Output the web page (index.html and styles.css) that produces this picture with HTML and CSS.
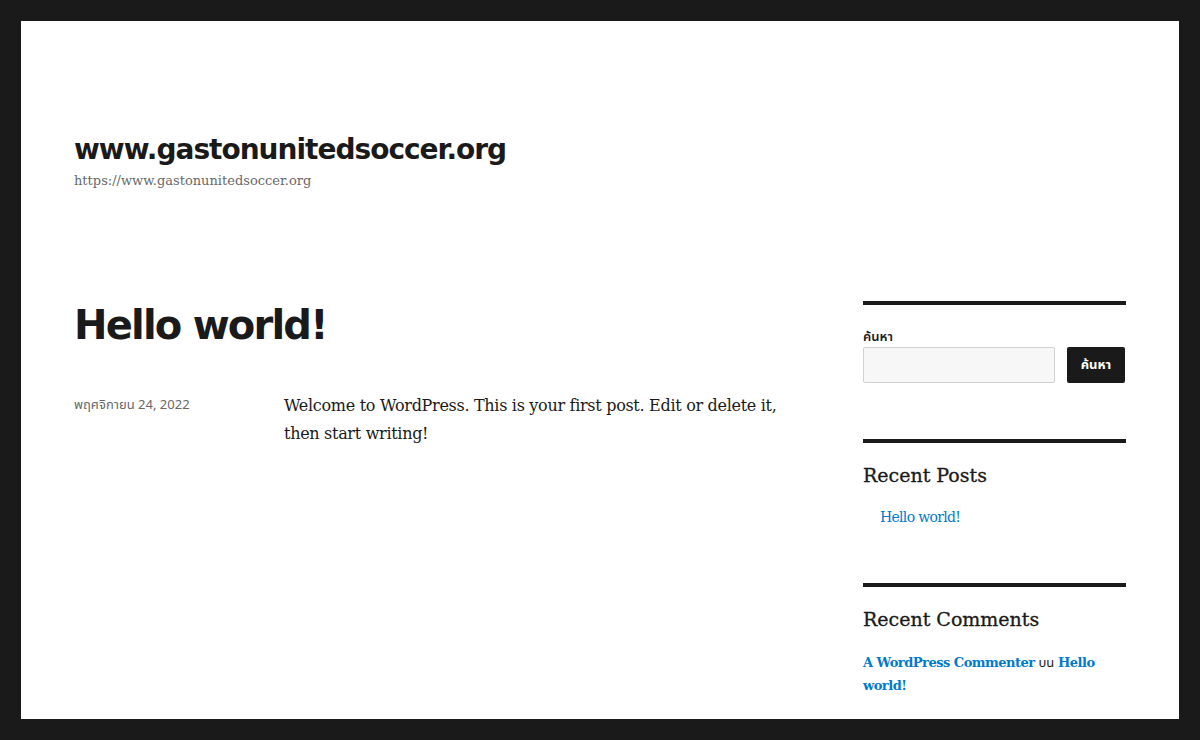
FILE: index.html
```html
<!DOCTYPE html>
<html lang="th">
<head>
    <meta charset="UTF-8">
    <meta name="viewport" content="width=device-width, initial-scale=1.0">
    <title>www.gastonunitedsoccer.org</title>
    <link rel="stylesheet" href="styles.css">
</head>
<body>
<div class="site">
    <header class="site-header">
        <p class="site-title"><a href="#">www.gastonunitedsoccer.org</a></p>
        <p class="site-description">https://www.gastonunitedsoccer.org</p>
    </header>

    <div class="site-content">
        <main class="content-area">
            <article class="post">
                <h1 class="entry-title">Hello world!</h1>
                <div class="entry-body">
                    <footer class="entry-footer">
                        <a href="#" class="posted-on">พฤศจิกายน 24, 2022</a>
                    </footer>
                    <div class="entry-content">
                        <p>Welcome to WordPress. This is your first post. Edit or delete it, then start writing!</p>
                    </div>
                </div>
            </article>
        </main>

        <aside class="sidebar">
            <section class="widget">
                <form class="search-form">
                    <label for="s" class="search-label">ค้นหา</label>
                    <div class="search-row">
                        <input type="search" id="s" class="search-field">
                        <button type="submit" class="search-button">ค้นหา</button>
                    </div>
                </form>
            </section>

            <section class="widget widget-posts">
                <h2 class="widget-title">Recent Posts</h2>
                <ul class="recent-posts">
                    <li><a href="#">Hello world!</a></li>
                </ul>
            </section>

            <section class="widget">
                <h2 class="widget-title">Recent Comments</h2>
                <ul class="recent-comments">
                    <li><a href="#" class="comment-author">A WordPress Commenter</a> <span class="on">บน</span> <a href="#" class="comment-post">Hello world!</a></li>
                </ul>
            </section>
        </aside>
    </div>
</div>
</body>
</html>
```

FILE: styles.css
```css
body {
    margin: 0;
    padding: 0;
    background: #1a1a1a;
    color: #1a1a1a;
    font-family: "DejaVu Serif", "Noto Sans Thai", "Noto Sans", serif;
    font-size: 16px;
    line-height: 1.75;
}

/* fixed black frame at the bottom, like the theme's body borders */
body::after {
    content: "";
    position: fixed;
    left: 0;
    right: 0;
    bottom: 0;
    height: 21px;
    background: #1a1a1a;
}

a {
    color: #007acc;
    text-decoration: none;
}

p {
    margin: 0;
}

.site {
    margin: 21px 21px 0;
    background: #fff;
    padding: 0 53px 60px;
    min-height: 800px;
}

.site-header {
    padding: 111px 0 109px;
}

.site-title {
    font-family: "DejaVu Sans", "Noto Sans", sans-serif;
    font-weight: 700;
    font-size: 28px;
    line-height: 35px;
    letter-spacing: -1px;
}

.site-title a {
    color: #1a1a1a;
}

.site-description {
    color: #686868;
    font-size: 13px;
    line-height: 22px;
    margin-top: 3px;
}

.site-content {
    display: flex;
}

.content-area {
    width: 736px;
    flex-shrink: 0;
}

.entry-title {
    font-family: "DejaVu Sans", "Noto Sans", sans-serif;
    font-weight: 700;
    font-size: 40px;
    line-height: 49px;
    margin: 0 0 42px;
    letter-spacing: -1.8px;
}

.entry-body {
    display: flex;
}

.entry-footer {
    width: 210px;
    flex-shrink: 0;
    margin-top: 2px;
    font-family: "Noto Sans", "Noto Sans Thai", sans-serif;
    font-size: 13px;
    line-height: 21px;
}

.posted-on {
    color: #686868;
}

.entry-content {
    width: 526px;
    letter-spacing: -0.3px;
}

.sidebar {
    margin-left: 53px;
    width: 263px;
    flex-shrink: 0;
}

.widget {
    border-top: 4px solid #1a1a1a;
    padding-top: 20px;
    margin-bottom: 56px;
}

.widget-posts {
    margin-bottom: 54px;
}

.search-label {
    display: block;
    font-family: "Noto Sans", "Noto Sans Thai", sans-serif;
    font-size: 13px;
    font-weight: 600;
    line-height: 22px;
}

.search-row {
    display: flex;
    gap: 12px;
}

.search-field {
    flex: 1;
    height: 36px;
    box-sizing: border-box;
    border: 1px solid #d1d1d1;
    border-radius: 2px;
    background: #f7f7f7;
    margin: 0;
}

.search-button {
    width: 58px;
    height: 36px;
    margin-right: 1px;
    border: none;
    border-radius: 2px;
    background: #1a1a1a;
    color: #fff;
    font-family: "Noto Sans", "Noto Sans Thai", sans-serif;
    font-weight: 700;
    font-size: 13px;
    padding: 0;
}

.widget-title {
    font-size: 19px;
    font-weight: 400;
    line-height: 24px;
    margin: 0;
    -webkit-text-stroke: 0.3px #1a1a1a;
}

.recent-posts,
.recent-comments {
    list-style: none;
    margin: 19px 0 0;
    padding: 0;
    font-size: 14px;
    line-height: 23px;
    letter-spacing: -0.7px;
}

.recent-comments {
    margin-top: 20px;
}

.recent-posts li {
    padding-left: 17px;
}

.recent-comments a {
    font-size: 13px;
    font-weight: 700;
    letter-spacing: -0.5px;
}

.recent-comments .on {
    font-size: 13px;
    letter-spacing: 0;
}
```
